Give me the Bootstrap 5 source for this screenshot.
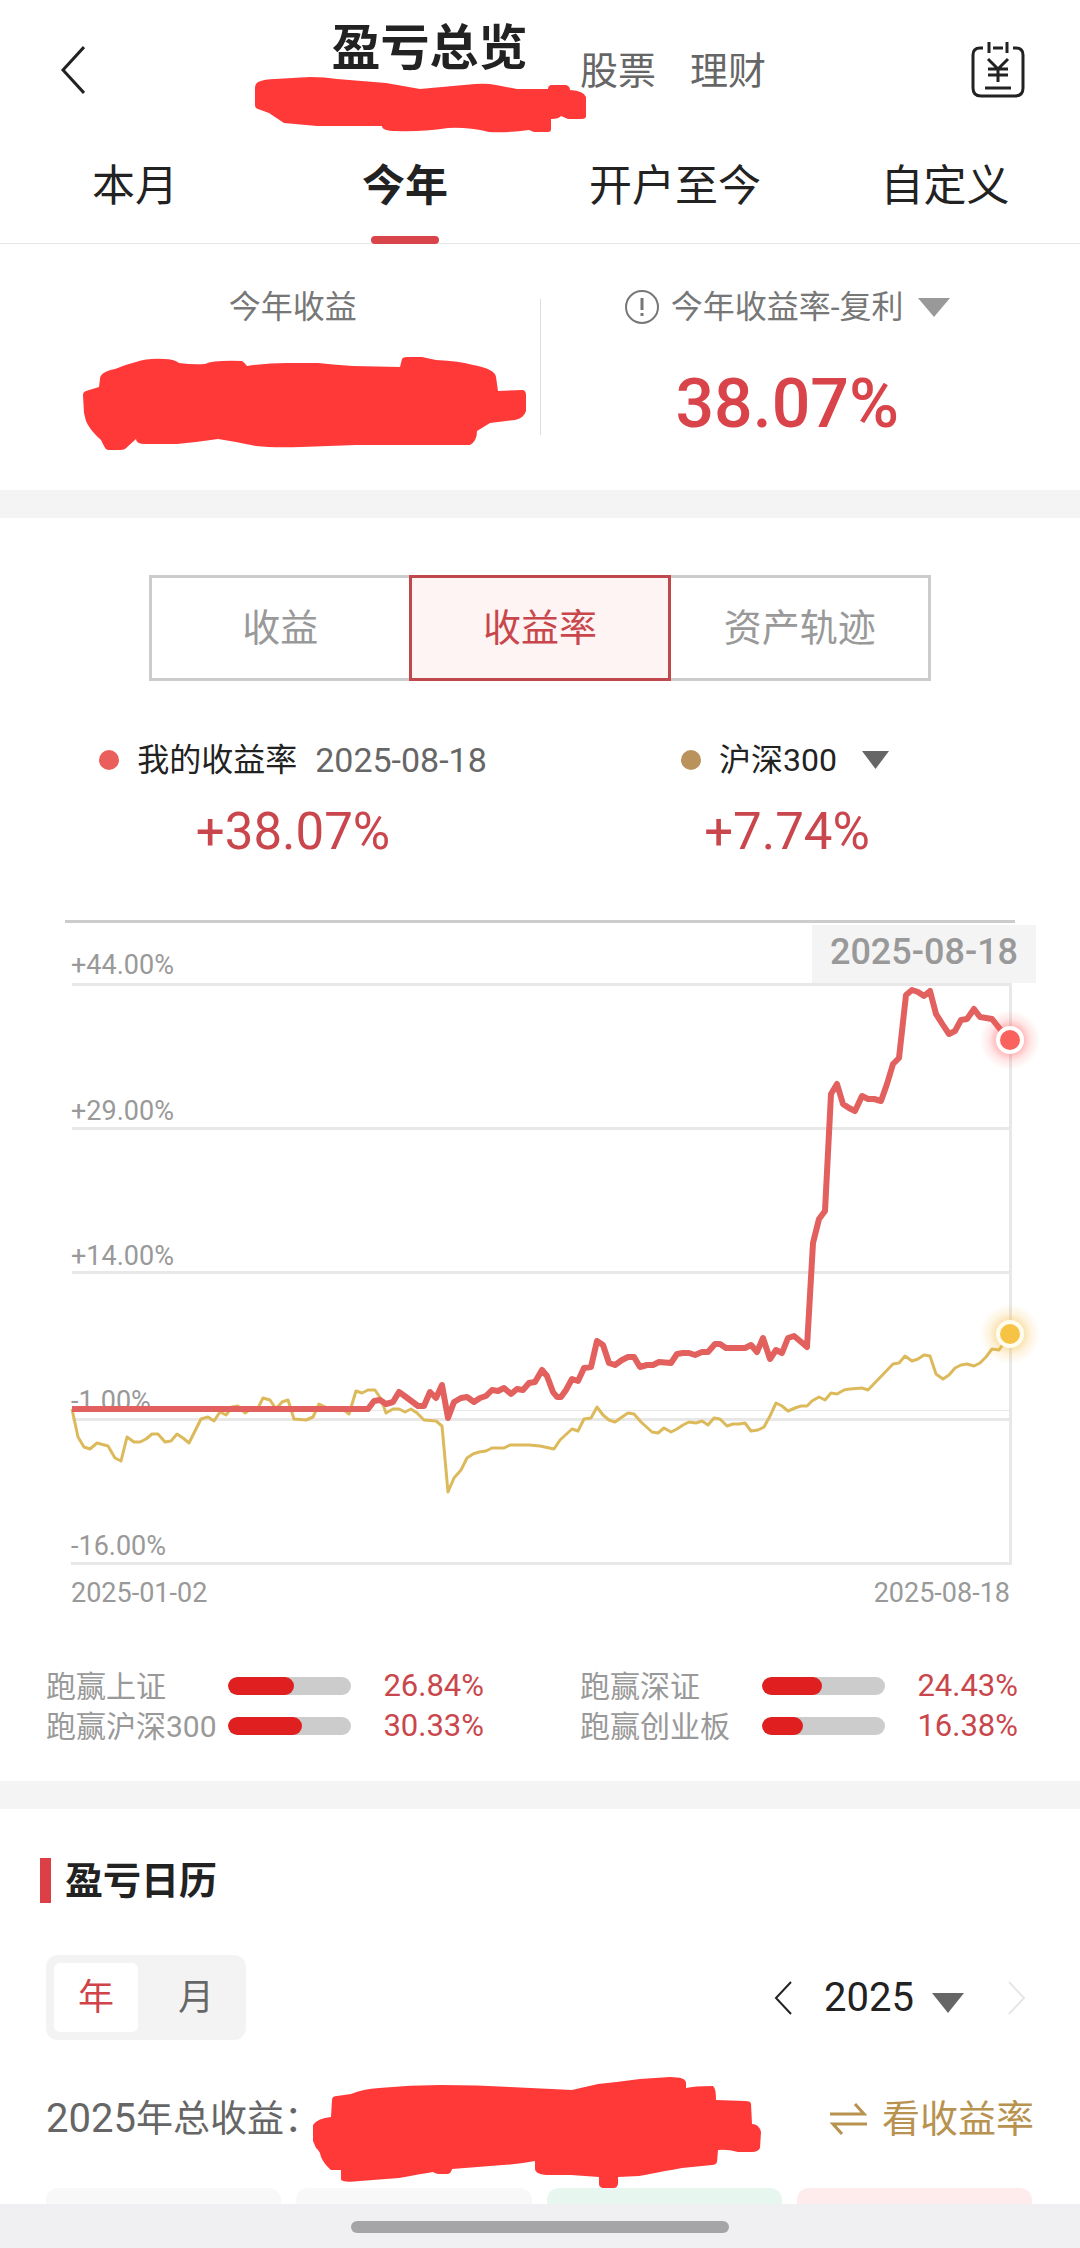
<!DOCTYPE html>
<html lang="zh-CN">
<head>
<meta charset="utf-8">
<meta name="viewport" content="width=device-width, initial-scale=1">
<title>盈亏总览</title>
<link href="https://cdn.jsdelivr.net/npm/bootstrap@5.3.0/dist/css/bootstrap.min.css" rel="stylesheet">
<style>
  :root { --ink: #222; --red: #d9434a; --rate: #c9474c; --gold: #b8924f; --edge: 46px; }
  body { font-family: Roboto, "Noto Sans CJK SC", sans-serif; color: var(--ink); background: #fff; }
  svg { display: block; flex: none; }
  .btn-plain { border: 0; padding: 0; background: transparent; color: inherit; }
  .picker { appearance: none; border: 0; padding: 0; background: transparent; color: inherit; font: inherit; }
  .scribble { fill: #ff3838; overflow: visible; }
  .edge { padding-left: var(--edge); padding-right: var(--edge); }
  .band { height: 28px; background: #f4f4f4; flex: none; }

  .back { margin-left: 59px; width: 26px; }
  .heading { margin-left: 170px; width: 325px; padding: 25px 0 8px; gap: 4px; }
  .heading h1 { font-size: 49px; line-height: 48px; padding-left: 24px; }
  .siblings { font-size: 38px; line-height: 40px; gap: 34px; padding-top: 2px; }
  .siblings a { color: #666; text-decoration: none; }
  .ledger { margin-right: 55px; }

  .period { border-bottom: 1px solid #e6e6e6; }
  .period a { flex: 1 1 0; position: relative; padding: 16px 0 27px; font-size: 43px; line-height: 60px; color: var(--ink); text-align: center; text-decoration: none; }
  .period a.active { font-weight: 700; }
  .period a.active::after { content: ""; position: absolute; left: 50%; bottom: -1px; width: 68px; height: 8px; margin-left: -34px; border-radius: 4px; background: var(--red); }

  .summary { padding-top: 46px; padding-bottom: 40px; color: #777; font-size: 32px; line-height: 34px; }
  .summary .picker { height: 34px; }
  .summary .rule { width: 1px; height: 136px; margin-top: 9px; background: #ddd; }
  .summary .hidden-sum { margin: 33px 14px 0 auto; }
  .summary .total { margin-top: 46px; font-size: 68px; line-height: 68px; font-weight: 500; color: var(--red); }

  .modes { margin: 57px 149px 0; }
  .modes button { flex: 1 1 0; height: 106px; border: 3px solid #ccc; background: #fff; color: #999; font-size: 38px; }
  .modes button + button { margin-left: -3px; }
  .modes button.active { position: relative; border-color: #c0474c; background: #fef4f3; color: var(--rate); }

  .legend { margin-top: 62px; font-size: 32px; line-height: 34px; }
  .legend .picker { height: 34px; }
  .legend time { font-size: 34px; color: #666; margin-left: 18px; }
  .dot { width: 20px; height: 20px; margin-right: 18px; border-radius: 50%; }
  .legend .value { margin-top: 29px; font-size: 51px; line-height: 52px; color: var(--rate); }
  .chart { margin-top: -2px; }
  .axis { font-size: 27px; fill: #999; }

  .beats { padding: 54px 62px 35px 46px; }
  .beats .pair { width: 438px; }
  .beats .line { height: 40px; }
  .beats .name { width: 182px; font-size: 30px; color: #999; white-space: nowrap; }
  .beats .progress { width: 123px; height: 18px; border-radius: 9px; background: #ccc; }
  .beats .progress-bar { border-radius: 9px; background: #e02020; }
  .beats .rate { font-size: 31px; color: var(--rate); }

  .cal-title { margin: 49px 0 0 40px; gap: 14px; }
  .cal-title i { width: 11px; height: 45px; background: #dc4046; }
  .cal-title h2 { font-size: 38px; line-height: 38px; font-weight: 700; }
  .cal-tools { margin-top: 52px; }
  .switcher { padding: 8px; gap: 16px; border-radius: 12px; background: #f3f3f3; }
  .switcher button { width: 84px; height: 69px; border-radius: 6px; font-size: 36px; color: #666; }
  .switcher button.active { background: #fff; color: #d0434a; }
  .year { font-size: 40px; }
  .yearly { margin-top: 37px; color: #666; font-size: 38px; line-height: 40px; }
  .yearly .num { font-size: 40px; }
  .yearly .caption, .yearly a { margin-top: 22px; }
  .yearly .caption { font-size: 37px; }
  .yearly .scribble { margin-left: -9px; }
  .yearly a { gap: 15px; color: var(--gold); text-decoration: none; }
  .months { gap: 15px; padding: 0 48px 0 46px; }
  .months div { flex: 1 1 0; height: 120px; border-radius: 12px; background: #f8f8f8; }
  .months .loss { background: #e7f6ee; }
  .months .gain { background: #feecec; }
  .homebar { height: 44px; background: #f0f0f2; flex: none; }
  .homebar span { width: 35%; height: 12px; border-radius: 6px; background: #a5a5a7; margin-top: 2px; }
</style>
</head>
<body>
<div class="vh-100 d-flex flex-column overflow-hidden">
<main class="flex-grow-1 overflow-hidden">

  <header class="d-flex align-items-center">
    <button class="btn-plain back" type="button" aria-label="返回">
      <svg width="26" height="48" viewBox="0 0 26 48" fill="none" stroke="#222" stroke-width="3"><path d="M25 1 4 24 25 47"/></svg>
    </button>
    <div class="heading d-flex flex-column">
      <h1 class="fw-bold text-center m-0">盈亏总览</h1>
      <svg class="scribble" width="331" height="55" viewBox="255 77 331 55"><path d="M255 88Q255 84 258 82 265 79 275 79L310 77Q325 77 337 79L386 83 420 89 475 84Q487 83 496 85L517 89H548Q548 85 552 85H566Q570 86 570 90 584 91 586 97V117Q585 119 582 119H568L561 116Q559 119 551 119V129Q551 132 548 132H534L529 130Q510 133 489 132 468 127 448 128 420 132 396 131 382 131 382 126L317 126 284 123 269 113 258 109Q255 108 255 105Z"/></svg>
    </div>
    <nav class="siblings d-flex">
      <a href="#">股票</a><a href="#">理财</a>
    </nav>
    <button class="btn-plain ledger ms-auto" type="button" aria-label="账单">
      <svg width="54" height="58" viewBox="0 0 54 58" fill="none" stroke="#222" stroke-width="3"><path d="M12 7H9Q2 7 2 14V47Q2 55 10 55H44Q52 55 52 47V14Q52 7 45 7H42M22 7H32M18 1V12M36 1V12M17 18 27 28 37 18M27 28V41M17 28H37M17 34H37M14 47H40"/></svg>
    </button>
  </header>

  <nav class="period d-flex">
    <a href="#">本月</a><a href="#" class="active" aria-current="page">今年</a><a href="#">开户至今</a><a href="#">自定义</a>
  </nav>

  <section class="summary edge d-flex align-items-start">
    <div class="col text-center">
      <div>今年收益</div>
      <svg class="scribble hidden-sum" width="443" height="93" viewBox="85 357 443 93"><path d="M102 379Q102 372 117 369 126 365 138 362 150 358 166 359 176 359 181 363 195 365 207 364 215 360 244 361 247 363 249 366 270 363 289 363H320Q338 365 355 366L402 367 404 359Q405 357 409 357H424L438 360Q462 361 475 365 497 369 498 377L500 391 525 390Q528 391 528 395V411Q526 418 517 420L492 423 479 431Q479 441 472 445H358L303 447Q275 448 258 446 234 441 220 439 200 442 179 444H147Q138 444 138 439L127 449Q125 450 122 450H110Q107 449 106 446L103 440Q94 432 90 425L88 421 86 413 85 395Q85 392 88 391L101 387Z"/></svg>
    </div>
    <div class="rule"></div>
    <div class="col text-center">
      <div class="d-flex justify-content-center align-items-center">
        <svg class="me-2" width="38" height="34" viewBox="0 0 38 34" fill="none" stroke="#777" stroke-width="2"><circle cx="17" cy="17" r="16"/><path d="M17 8V20M17 23V26" stroke-width="3"/></svg>
        <select class="picker" aria-label="收益率口径"><option>今年收益率-复利</option></select>
        <svg width="46" height="20" viewBox="0 0 46 20"><path d="M14 1H46L30 20Z" fill="#999"/></svg>
      </div>
      <div class="total">38.07%</div>
    </div>
  </section>

  <div class="band"></div>

  <section>
    <div class="modes d-flex" role="group" aria-label="图表类型">
      <button type="button">收益</button><button type="button" class="active">收益率</button><button type="button">资产轨迹</button>
    </div>

    <div class="legend edge d-flex text-center">
      <div class="col">
        <div class="d-flex justify-content-center align-items-center"><span class="dot" style="background:#ea5e5b"></span>我的收益率<time>2025-08-18</time></div>
        <div class="value">+38.07%</div>
      </div>
      <div class="col">
        <div class="d-flex justify-content-center align-items-center"><span class="dot" style="background:#ba935c"></span>
          <select class="picker" aria-label="对比指数"><option>沪深300</option></select>
          <svg width="56" height="18" viewBox="0 0 56 18"><path d="M25 0H52L38.500 18Z" fill="#666"/></svg>
        </div>
        <div class="value">+7.74%</div>
      </div>
    </div>

    <svg class="chart w-100 h-auto" viewBox="0 856 1080 756" role="img" aria-label="收益率走势">
      <defs>
        <radialGradient id="glowRed"><stop offset=".35" stop-color="#f55" stop-opacity=".5"/><stop offset=".7" stop-color="#f55" stop-opacity=".14"/><stop offset="1" stop-color="#f55" stop-opacity="0"/></radialGradient>
        <radialGradient id="glowGold"><stop offset=".35" stop-color="#f5b83c" stop-opacity=".5"/><stop offset=".7" stop-color="#f5b83c" stop-opacity=".16"/><stop offset="1" stop-color="#f5b83c" stop-opacity="0"/></radialGradient>
      </defs>
      <path d="M65 921.500H1015" stroke="#ccc" stroke-width="3"/>
      <path d="M72 984.500H1012M72 1128.500H1010M72 1272.500H1010M72 1419.500H1010M71 1563.500H1012M1010.500 984V1564" stroke="#e8e8e8" stroke-width="3" fill="none"/>
      <path d="M72 1410.500H1010" stroke="#e8e8e8"/>
      <g class="axis">
        <text x="71" y="974">+44.00%</text><text x="71" y="1120">+29.00%</text><text x="71" y="1265">+14.00%</text>
        <text x="71" y="1410">-1.00%</text><text x="71" y="1555">-16.00%</text>
        <text x="71" y="1602">2025-01-02</text><text x="1010" y="1602" text-anchor="end">2025-08-18</text>
      </g>
      <polyline fill="none" stroke="#dcba5c" stroke-width="3" stroke-linejoin="round" points="72,1409 78,1437 84,1447 90,1449 97,1443 108,1446 115,1458 121,1461 127,1437 134,1442 140,1442 146,1439 152,1434 158,1434 165,1442 171,1441 177,1434 183,1438 189,1443 201,1419 208,1417 214,1421 220,1412 226,1415 232,1407 238,1406 245,1413 251,1409 258,1408 263,1398 270,1400 276,1409 282,1402 288,1400 294,1419 306,1420 313,1417 319,1404 325,1407 331,1409 343,1409 349,1414 356,1391 362,1393 368,1390 375,1390 381,1399 386,1413 393,1409 399,1409 405,1412 411,1409 417,1413 424,1420 436,1421 442,1426 448,1492 454,1478 461,1470 467,1458 473,1454 479,1452 486,1451 492,1448 504,1448 510,1445 529,1445 540,1446 554,1449 560,1440 572,1429 578,1431 584,1419 591,1418 597,1407 603,1415 609,1420 615,1422 622,1417 628,1413 634,1414 641,1422 652,1432 658,1433 664,1428 671,1432 677,1429 683,1425 689,1422 696,1423 702,1421 708,1425 714,1418 720,1419 727,1426 733,1424 739,1424 745,1423 751,1431 758,1430 764,1427 770,1416 776,1403 782,1406 788,1411 795,1408 801,1406 807,1406 812,1401 819,1397 825,1400 831,1393 837,1394 844,1390 850,1389 862,1388 868,1390 893,1364 899,1363 905,1356 912,1361 918,1359 924,1355 930,1356 936,1374 943,1379 949,1375 955,1368 961,1365 967,1364 974,1366 980,1363 986,1357 992,1349 999,1350 1010,1334"/>
      <polyline fill="none" stroke="#e2605d" stroke-width="6" stroke-linejoin="round" points="72,1409 362,1409 368,1409 374,1401 380,1400 386,1404 393,1402 399,1392 406,1397 418,1406 424,1406 430,1392 436,1398 442,1385 448,1418 454,1402 461,1398 467,1397 474,1402 480,1398 486,1396 492,1390 498,1391 504,1388 511,1394 517,1389 523,1390 529,1383 535,1382 542,1370 547,1376 553,1392 557,1397 561,1397 566,1390 572,1379 578,1381 584,1368 591,1367 597,1341 603,1345 609,1363 615,1365 622,1360 628,1357 634,1357 640,1367 647,1365 653,1365 659,1362 671,1363 677,1354 683,1353 689,1353 695,1355 702,1352 708,1352 715,1344 720,1344 726,1348 745,1348 751,1345 757,1352 763,1338 770,1359 776,1350 782,1353 788,1338 794,1336 800,1341 807,1347 813,1243 819,1219 825,1211 831,1094 837,1084 843,1104 849,1108 855,1111 862,1096 868,1099 874,1099 881,1101 887,1084 893,1064 899,1058 906,995 912,990 918,992 924,996 930,991 936,1014 943,1025 949,1034 955,1031 961,1020 967,1019 974,1009 980,1017 992,1019 1000,1029 1010,1040"/>
      <circle cx="1010" cy="1040" r="30" fill="url(#glowRed)"/><circle cx="1010" cy="1040" r="14" fill="#fff"/><circle cx="1010" cy="1040" r="10" fill="#fa625e"/>
      <circle cx="1010" cy="1334" r="30" fill="url(#glowGold)"/><circle cx="1010" cy="1334" r="14" fill="#fffdf0"/><circle cx="1010" cy="1334" r="10" fill="#f7c344"/>
      <rect x="812" y="925" width="224" height="58" fill="#f4f4f4"/>
      <text x="924" y="964" text-anchor="middle" font-size="36" font-weight="500" fill="#999">2025-08-18</text>
    </svg>

    <div class="beats d-flex justify-content-between">
      <div class="pair">
        <div class="line d-flex align-items-center"><span class="name">跑赢上证</span><div class="progress"><div class="progress-bar" style="width:54%"></div></div><span class="rate ms-auto">26.84%</span></div>
        <div class="line d-flex align-items-center"><span class="name">跑赢沪深300</span><div class="progress"><div class="progress-bar" style="width:60%"></div></div><span class="rate ms-auto">30.33%</span></div>
      </div>
      <div class="pair">
        <div class="line d-flex align-items-center"><span class="name">跑赢深证</span><div class="progress"><div class="progress-bar" style="width:49%"></div></div><span class="rate ms-auto">24.43%</span></div>
        <div class="line d-flex align-items-center"><span class="name">跑赢创业板</span><div class="progress"><div class="progress-bar" style="width:33%"></div></div><span class="rate ms-auto">16.38%</span></div>
      </div>
    </div>
  </section>

  <div class="band"></div>

  <section>
    <div class="cal-title d-flex align-items-center"><i></i><h2 class="m-0">盈亏日历</h2></div>
    <div class="cal-tools edge d-flex align-items-center justify-content-between">
      <div class="switcher d-flex" role="group" aria-label="日历粒度">
        <button type="button" class="btn-plain active">年</button><button type="button" class="btn-plain">月</button>
      </div>
      <div class="year d-flex align-items-center">
        <button class="btn-plain" type="button" aria-label="上一年"><svg width="50" height="34" viewBox="0 0 50 34" fill="none" stroke="#222" stroke-width="2"><path d="M17 1 2 17 17 33"/></svg></button>
        <select class="picker" aria-label="年份"><option>2025</option></select>
        <svg width="94" height="30" viewBox="0 0 94 30"><path d="M18 10H50L34 30Z" fill="#666"/></svg>
        <button class="btn-plain me-2" type="button" aria-label="下一年"><svg width="18" height="34" viewBox="0 0 18 34" fill="none" stroke="#e6e6e6" stroke-width="2"><path d="M1 1 16 17 1 33"/></svg></button>
      </div>
    </div>
    <div class="yearly edge d-flex align-items-start">
      <span class="caption text-nowrap"><span class="num">2025</span>年总收益：</span>
      <svg class="scribble" width="449" height="111" viewBox="312 2077 449 111"><path d="M332 2100Q332 2096 337 2096L351 2094Q363 2089 379 2088 410 2085 441 2085 478 2085 510 2087L572 2090Q585 2087 598 2084 618 2082 640 2079L670 2077Q686 2077 686 2083V2088Q694 2086 713 2086 716 2088 716 2100L745 2101Q751 2101 751 2104L752 2124Q759 2124 761 2132L760 2148Q758 2152 752 2152H738Q727 2149 718 2150L717 2162Q716 2165 712 2165L682 2168Q672 2170 665 2171 650 2174 639 2176L618 2177V2184Q617 2188 614 2188H603Q599 2187 599 2184V2177Q585 2176 571 2175H546Q535 2174 535 2169V2161Q520 2164 503 2165L452 2169Q451 2174 447 2174H438Q434 2173 433 2172 420 2174 399 2178L360 2181Q341 2183 341 2179V2170L331 2170Q324 2164 321 2157 320 2151 316 2148L313 2141V2125Q318 2118 331 2117Z"/></svg>
      <a href="#" class="ms-auto d-flex align-items-center">
        <svg width="37" height="32" viewBox="0 0 37 32" fill="none" stroke="#b8924f" stroke-width="3"><path d="M0 11H34L25 1M37 21H3L12 31"/></svg>看收益率</a>
    </div>
    <div class="months d-flex"><div></div><div></div><div class="loss"></div><div class="gain"></div></div>
  </section>
</main>

<footer class="homebar d-flex justify-content-center align-items-center"><span></span></footer>
</div>
<script src="https://cdn.jsdelivr.net/npm/bootstrap@5.3.0/dist/js/bootstrap.bundle.min.js"></script>
</body>
</html>
